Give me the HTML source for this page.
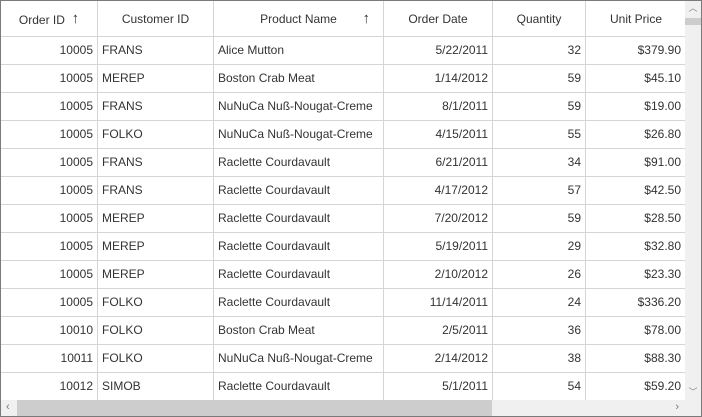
<!DOCTYPE html><html><head><style>
body{margin:0;width:702px;height:417px;overflow:hidden;background:#fff;font-family:"Liberation Sans",sans-serif;font-size:12px;color:#333}
.g{position:absolute;left:0;top:0;width:700px;height:415px;border:1px solid #7a7a7a;overflow:hidden}
.r{position:absolute;left:0;height:27px;border-bottom:1px solid #d4d4d4;width:684px}
.c{position:absolute;top:0;height:100%;border-right:1px solid #d4d4d4;box-sizing:border-box;line-height:27px;padding:0 4px;white-space:nowrap}
.h .c{line-height:37px;text-align:center;color:#333}
.R{text-align:right}
.ar{font-size:15px;font-family:"Liberation Sans",sans-serif;position:relative;top:-1px}
</style></head><body><div class="g" id="g">
<div class="r h" style="top:0;height:35px">
<div class="c" style="left:0;width:97px">Order ID &nbsp;<span class="ar">↑</span></div>
<div class="c" style="left:97px;width:116px">Customer ID</div>
<div class="c" style="left:213px;width:170px">Product Name<span class="ar" style="position:absolute;right:13px">↑</span></div>
<div class="c" style="left:383px;width:109px">Order Date</div>
<div class="c" style="left:492px;width:93px">Quantity</div>
<div class="c" style="left:585px;width:100px;border-right:none">Unit Price</div>
</div>
<div style="position:absolute;left:684px;top:0;width:16px;height:399px;background:#f0f0f0"><div style="text-align:center;font-size:9px;color:#888;line-height:14px">︿</div><div style="position:absolute;left:0;top:17px;width:16px;height:7px;background:#cdcdcd"></div><div style="position:absolute;bottom:2px;width:16px;text-align:center;font-size:9px;color:#888">﹀</div></div>
<div style="position:absolute;left:0;top:399px;width:684px;height:16px;background:#f0f0f0"><div style="position:absolute;left:16px;top:0;width:475px;height:16px;background:#cdcdcd"></div><span style="position:absolute;left:5px;top:1px;font-size:11px;color:#777">‹</span><span style="position:absolute;right:6px;top:1px;font-size:11px;color:#777">›</span></div>
<div style="position:absolute;left:684px;top:399px;width:16px;height:16px;background:#f0f0f0"></div>
</div>
<script>
var d=[["FRANS","Alice Mutton","5/22/2011",32,"$379.90",10005],["MEREP","Boston Crab Meat","1/14/2012",59,"$45.10",10005],["FRANS","NuNuCa Nuß-Nougat-Creme","8/1/2011",59,"$19.00",10005],["FOLKO","NuNuCa Nuß-Nougat-Creme","4/15/2011",55,"$26.80",10005],["FRANS","Raclette Courdavault","6/21/2011",34,"$91.00",10005],["FRANS","Raclette Courdavault","4/17/2012",57,"$42.50",10005],["MEREP","Raclette Courdavault","7/20/2012",59,"$28.50",10005],["MEREP","Raclette Courdavault","5/19/2011",29,"$32.80",10005],["MEREP","Raclette Courdavault","2/10/2012",26,"$23.30",10005],["FOLKO","Raclette Courdavault","11/14/2011",24,"$336.20",10005],["FOLKO","Boston Crab Meat","2/5/2011",36,"$78.00",10010],["FOLKO","NuNuCa Nuß-Nougat-Creme","2/14/2012",38,"$88.30",10011],["SIMOB","Raclette Courdavault","5/1/2011",54,"$59.20",10012]];
var h="";d.forEach(function(x,i){h+='<div class="r" style="top:'+(36+i*28)+'px"><div class="c R" style="left:0;width:97px">'+x[5]+'</div><div class="c" style="left:97px;width:116px">'+x[0]+'</div><div class="c" style="left:213px;width:170px">'+x[1]+'</div><div class="c R" style="left:383px;width:109px">'+x[2]+'</div><div class="c R" style="left:492px;width:93px">'+x[3]+'</div><div class="c R" style="left:585px;width:99px;border-right:none">'+x[4]+'</div></div>'});
document.getElementById("g").insertAdjacentHTML("afterbegin",h);
</script></body></html>
